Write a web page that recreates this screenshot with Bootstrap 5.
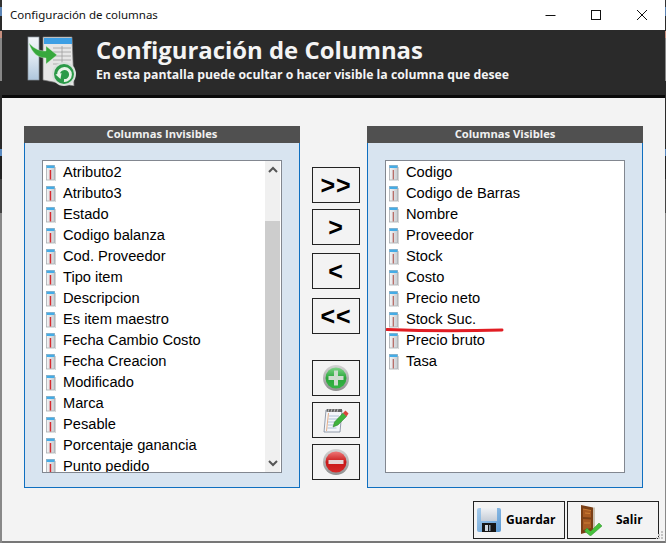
<!DOCTYPE html>
<html lang="es">
<head>
<meta charset="utf-8">
<link href="https://cdn.jsdelivr.net/npm/bootstrap@5.3.0/dist/css/bootstrap.min.css" rel="stylesheet">
<style>
html,body{margin:0;width:666px;height:543px;overflow:hidden;background:#fff}
body{font-family:"Liberation Sans",Arial,sans-serif;color:#000;position:relative}
.win{width:666px;height:543px;border-left:2px solid #888;border-right:1px solid #888;border-image:linear-gradient(#333 0 9px,#5d85b5 9px 18px,#2a2a2a 18px 33px,#c89080 33px 40px,#888 40px 82px,#2a2a2a 82px 150px,#5a8ac0 150px 157px,#222 157px 180px,#444 180px 213px,#888 213px 100%) 2}
.tbar{height:30px;background:#fff;padding-left:8px;font:11.5px/30px "Noto Sans","Open Sans",sans-serif;color:#111}
.wbtn{width:46px;height:30px}
.hdr{height:68px;background:#2a2a2a;border-bottom:3px solid #0a0a0a;padding-left:24px;color:#f4f4f4;font-weight:700}
.hdr h1{font-size:23.9px;line-height:28px;margin:6px 0 0 0;font-weight:700;font-family:"Open Sans","Liberation Sans",sans-serif}
.hdr p{font-size:12.25px;line-height:16px;margin:3px 0 0 0;font-family:"Open Sans","Liberation Sans",sans-serif;font-weight:700}
.hico{margin-right:16px;margin-top:2px}
.bodyarea{height:445px;background:#f3f3f3;border-bottom:2px solid #777;padding:28px 0 0 22px}
.pnl{width:276px;height:362px;flex:none}
.pnl-h{height:17px;background:#505050;color:#f0f0f0;font:700 11.2px/15px "Open Sans",sans-serif;text-align:center}
.pnl-b{height:345px;background:#d8e4f0;border:1px solid #0f6fc0;border-top:0;padding:17px 17px 14px 17px}
.lst{height:313px;background:#fff;border:1px solid #828790;overflow:hidden}
.rowsbox{flex:1 1 auto;overflow:hidden;min-width:0;padding-top:1px}
.lrow{height:21px;display:flex;align-items:center;font-size:14.67px;line-height:21px;white-space:nowrap;padding-left:3px}
.lrow svg{margin-right:7px;flex:none}
.lst-r{padding-top:1px}
.sbar{width:15px;margin-right:1px;background:#f0f0f0;flex:none}
.sb-a{height:17px}
.sb-gap1{height:43px}
.sb-th{height:159px;background:#cdcdcd}
.mid{width:48px;margin:0 7px 0 12px;flex:none;padding-top:41px}
.cbtn{width:48px;height:36px;border:1px solid #222;background:#f3f3f3;display:flex;align-items:center;justify-content:center;padding:0;border-radius:0;color:#000;font:700 25px/1 "Liberation Sans",sans-serif;letter-spacing:1px}
.cbtn:hover,.cbtn:active{background:#f3f3f3;border-color:#222;color:#000}
.g6{margin-top:6px}.g8{margin-top:8px}.g9{margin-top:9px}.g26{margin-top:26px}
.foot{gap:2px;margin:13px 0 0 449px}
.fbtn{width:92px;height:38px;border:1px solid #222;background:#f3f3f3;border-radius:0;padding:0;display:flex;align-items:center;font:700 12px/1 "Open Sans",sans-serif;color:#000}
.fbtn:hover,.fbtn:active{background:#f3f3f3;border-color:#222;color:#000}
.fic1{margin:0 5px 0 3px}
.fic2{margin:0 14px 0 12px}
.redmark{position:absolute;left:386px;top:327px}
.grip{position:absolute;right:2px;bottom:2px}
.defsvg{position:absolute}
</style>
</head>
<body>
<svg width="0" height="0" class="defsvg">
<defs>
<linearGradient id="gpg" x1="0" x2="1"><stop offset="0" stop-color="#f4f5f6"/><stop offset="1" stop-color="#c9cdd1"/></linearGradient>
<linearGradient id="grim" x1="0" y1="0" x2="0" y2="1"><stop offset="0" stop-color="#d4d4d4"/><stop offset="1" stop-color="#8f8f8f"/></linearGradient>
<linearGradient id="ggr" x1="0" y1="0" x2="0" y2="1"><stop offset="0" stop-color="#7ed488"/><stop offset=".5" stop-color="#2aa63a"/><stop offset="1" stop-color="#35b545"/></linearGradient>
<linearGradient id="grd" x1="0" y1="0" x2="0" y2="1"><stop offset="0" stop-color="#e77"/><stop offset=".5" stop-color="#c81818"/><stop offset="1" stop-color="#d62a2a"/></linearGradient>
<linearGradient id="gfl" x1="0" y1="0" x2="1" y2="1"><stop offset="0" stop-color="#a9cdec"/><stop offset="1" stop-color="#5b9ad4"/></linearGradient>
<linearGradient id="gfl2" x1="0" y1="0" x2="0" y2="1"><stop offset="0" stop-color="#f0f2f5"/><stop offset="1" stop-color="#c5ccd6"/></linearGradient>
<linearGradient id="gstrip" x1="0" y1="0" x2="0" y2="1"><stop offset="0" stop-color="#f2f5f8"/><stop offset=".5" stop-color="#dbe6f0"/><stop offset="1" stop-color="#aec6dc"/></linearGradient>
<symbol id="ci" viewBox="0 0 10 16">
<rect x=".5" y=".5" width="8" height="14.500" fill="url(#gpg)" stroke="#a8acb0" stroke-width=".8"/>
<rect x=".5" y=".5" width="8" height="2.500" fill="#45ace6"/>
<rect x="9" y="2" width="1" height="14" fill="#d5d5d5"/>
<rect x="3.700" y="5" width="1.500" height="9.500" fill="#d62a2e"/>
</symbol>
<symbol id="cj" viewBox="0 0 10 16">
<rect x=".5" y=".5" width="8" height="14.500" fill="url(#gpg)" stroke="#a8acb0" stroke-width=".8"/>
<rect x=".5" y=".5" width="8" height="2.500" fill="#45ace6"/>
<rect x="9" y="2" width="1" height="14" fill="#d5d5d5"/>
<rect x="3.700" y="5" width="1.200" height="9.500" fill="#b4635c"/>
</symbol>
</defs>
</svg>
<div class="win d-flex flex-column">
 <div class="tbar d-flex justify-content-between">
  <span>Configuración de columnas</span>
  <div class="d-flex">
   <div class="wbtn d-flex align-items-center justify-content-center"><svg width="12" height="12"><path d="M1.500 6.500h10" stroke="#111"/></svg></div>
   <div class="wbtn d-flex align-items-center justify-content-center"><svg width="12" height="12"><rect x="1.500" y="1.500" width="9" height="9" fill="none" stroke="#111"/></svg></div>
   <div class="wbtn d-flex align-items-center justify-content-center"><svg width="12" height="12"><path d="M1 1l10 10M11 1L1 11" stroke="#111"/></svg></div>
  </div>
 </div>
 <div class="hdr d-flex">
  <svg class="hico" width="54" height="54" viewBox="0 0 54 54">
   <rect x="2" y="5" width="11" height="43" fill="url(#gstrip)" stroke="#8a949e" stroke-width=".7"/>
   <path d="M17 5h29l2 49-31-6z" fill="#e6e6e6" stroke="#777" stroke-width=".7"/>
   <rect x="18" y="6" width="28" height="6" fill="#3d9fe4"/>
   <path d="M27 16h18M27 20h18M27 24h18M27 28h18M27 32h16M36 14v20" stroke="#a0a0a0" stroke-width=".8"/>
   <path d="M3 11c6 7 12 8 17 8v-5l11 9-11 9v-6c-7 0-14-4-17-15z" fill="#37a83d" stroke="#d8efd6" stroke-width=".4"/>
   <circle cx="38" cy="42" r="12" fill="#d9e0dc"/>
   <circle cx="38" cy="42" r="10" fill="#2b9a48"/>
   <path d="M32.500 43a6 6 0 1 1 5.500 5.500" fill="none" stroke="#e8f4e8" stroke-width="2.800"/>
   <path d="M29.500 42.500l6-1.500-1 6z" fill="#e8f4e8"/>
  </svg>
  <div>
   <h1>Configuración de Columnas</h1>
   <p>En esta pantalla puede ocultar o hacer visible la columna que desee</p>
  </div>
 </div>
 <div class="bodyarea">
  <div class="d-flex">
   <div class="pnl">
    <div class="pnl-h">Columnas Invisibles</div>
    <div class="pnl-b">
     <div class="lst d-flex">
      <div class="rowsbox">
       <div class="lrow"><svg width="10" height="16"><use href="#ci"/></svg>Atributo2</div>
       <div class="lrow"><svg width="10" height="16"><use href="#ci"/></svg>Atributo3</div>
       <div class="lrow"><svg width="10" height="16"><use href="#ci"/></svg>Estado</div>
       <div class="lrow"><svg width="10" height="16"><use href="#ci"/></svg>Codigo balanza</div>
       <div class="lrow"><svg width="10" height="16"><use href="#ci"/></svg>Cod. Proveedor</div>
       <div class="lrow"><svg width="10" height="16"><use href="#ci"/></svg>Tipo item</div>
       <div class="lrow"><svg width="10" height="16"><use href="#ci"/></svg>Descripcion</div>
       <div class="lrow"><svg width="10" height="16"><use href="#ci"/></svg>Es item maestro</div>
       <div class="lrow"><svg width="10" height="16"><use href="#ci"/></svg>Fecha Cambio Costo</div>
       <div class="lrow"><svg width="10" height="16"><use href="#ci"/></svg>Fecha Creacion</div>
       <div class="lrow"><svg width="10" height="16"><use href="#ci"/></svg>Modificado</div>
       <div class="lrow"><svg width="10" height="16"><use href="#ci"/></svg>Marca</div>
       <div class="lrow"><svg width="10" height="16"><use href="#ci"/></svg>Pesable</div>
       <div class="lrow"><svg width="10" height="16"><use href="#ci"/></svg>Porcentaje ganancia</div>
       <div class="lrow"><svg width="10" height="16"><use href="#ci"/></svg>Punto pedido</div>
      </div>
      <div class="sbar d-flex flex-column">
       <div class="sb-a d-flex align-items-center justify-content-center"><svg width="10" height="7"><path d="M1 6l4-4 4 4" fill="none" stroke="#555" stroke-width="2"/></svg></div>
       <div class="sb-gap1"></div>
       <div class="sb-th"></div>
       <div class="flex-grow-1"></div>
       <div class="sb-a d-flex align-items-center justify-content-center"><svg width="10" height="7"><path d="M1 1l4 4 4-4" fill="none" stroke="#555" stroke-width="2"/></svg></div>
      </div>
     </div>
    </div>
   </div>
   <div class="mid d-flex flex-column">
    <button class="cbtn btn">&gt;&gt;</button>
    <button class="cbtn btn g6">&gt;</button>
    <button class="cbtn btn g8">&lt;</button>
    <button class="cbtn btn g9">&lt;&lt;</button>
    <button class="cbtn btn g26" aria-label="Agregar"><svg width="26" height="26" viewBox="0 0 26 26"><circle cx="13" cy="13" r="13" fill="url(#grim)"/><circle cx="13" cy="13" r="10.500" fill="url(#ggr)"/><path d="M11 5.500h4V11h5.500v4H15v5.500h-4V15H5.500v-4H11z" fill="#cfdccf"/></svg></button>
    <button class="cbtn btn g6" aria-label="Editar"><svg width="26" height="26" viewBox="0 0 26 26"><path d="M3 3h16l-2 22H1z" fill="#f4f6fa" stroke="#7a8798" stroke-width=".8"/><path d="M4 2h15v3H3.500z" fill="#666"/><path d="M5 5l1-3M8 5l1-3M11 5l1-3M14 5l1-3" stroke="#eee" stroke-width=".6"/><path d="M6 9h10M5.500 12h10M5 15h10M5 18h9M4.500 21h9" stroke="#9fb6cf" stroke-width=".8"/><path d="M5.500 6L3.500 24" stroke="#e09a6a" stroke-width=".8"/><path d="M10 20l1.500-5L20 6l3.500 3.500L15 18z" fill="#3fb33c" stroke="#2b7a2b" stroke-width=".5"/><path d="M20 6l2.500-2.500 3 3-2 3z" fill="#d8443a"/></svg></button>
    <button class="cbtn btn g6" aria-label="Eliminar"><svg width="26" height="26" viewBox="0 0 26 26"><circle cx="13" cy="13" r="13" fill="url(#grim)"/><circle cx="13" cy="13" r="10.500" fill="url(#grd)"/><rect x="5.500" y="11" width="15" height="4" fill="#e4d8d8"/></svg></button>
   </div>
   <div class="pnl">
    <div class="pnl-h">Columnas Visibles</div>
    <div class="pnl-b">
     <div class="lst lst-r">
      <div class="lrow"><svg width="10" height="16"><use href="#cj"/></svg>Codigo</div>
      <div class="lrow"><svg width="10" height="16"><use href="#cj"/></svg>Codigo de Barras</div>
      <div class="lrow"><svg width="10" height="16"><use href="#cj"/></svg>Nombre</div>
      <div class="lrow"><svg width="10" height="16"><use href="#cj"/></svg>Proveedor</div>
      <div class="lrow"><svg width="10" height="16"><use href="#cj"/></svg>Stock</div>
      <div class="lrow"><svg width="10" height="16"><use href="#cj"/></svg>Costo</div>
      <div class="lrow"><svg width="10" height="16"><use href="#cj"/></svg>Precio neto</div>
      <div class="lrow"><svg width="10" height="16"><use href="#cj"/></svg>Stock Suc.</div>
      <div class="lrow"><svg width="10" height="16"><use href="#cj"/></svg>Precio bruto</div>
      <div class="lrow"><svg width="10" height="16"><use href="#cj"/></svg>Tasa</div>
     </div>
    </div>
   </div>
  </div>
  <div class="foot d-flex">
   <button class="fbtn btn"><svg class="fic1" width="24" height="24" viewBox="0 0 24 24"><rect x="0" y="0" width="24" height="24" rx="2" fill="url(#gfl)"/><rect x="4" y="0" width="16" height="13" fill="url(#gfl2)"/><rect x="5" y="15" width="14" height="9" fill="#161616"/><rect x="8" y="17" width="3" height="6" fill="#cfd8e0"/><rect x="12" y="17" width="1.500" height="6" fill="#8fa0b0"/></svg><span>Guardar</span></button>
   <button class="fbtn btn"><svg class="fic2" width="22" height="31" viewBox="0 0 22 31"><path d="M1 0l12 2.500v23L1 29z" fill="#7a3f16"/><path d="M13 2.500h2V24h-2z" fill="#c9c0b0"/><path d="M3 4l8 1.500v7L3 12zM3 14l8 .5v8.500l-8 2z" fill="#a85a22"/><path d="M3 4l8 1.500M5 8l5 .5M4 18l6 0" stroke="#d98a3a" stroke-width=".8"/><path d="M7 23l3.500 3.500L19 18l3 3-11.500 10L4.500 26z" fill="#46c23c" stroke="#2a8a28" stroke-width=".5"/></svg><span>Salir</span></button>
  </div>
 </div>
</div>
<svg class="redmark" width="120" height="8"><path d="M1 2.500C40 4 80 4 116 3" stroke="#e11d23" stroke-width="3" fill="none" stroke-linecap="round"/></svg>
<svg class="grip" width="8" height="10"><g fill="#c4c4c4"><rect x="5" y="0" width="2" height="2"/><rect x="5" y="3" width="2" height="2"/><rect x="5" y="6" width="2" height="2"/><rect x="2" y="3" width="2" height="2"/><rect x="2" y="6" width="2" height="2"/><rect x="-1" y="6" width="2" height="2"/></g></svg>
</body>
</html>
